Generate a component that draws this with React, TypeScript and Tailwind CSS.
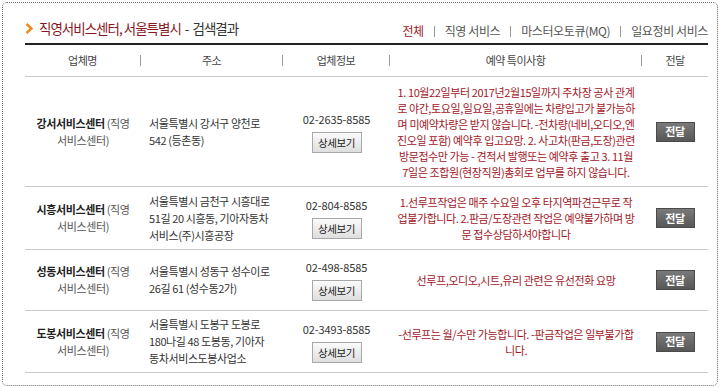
import React from 'react'

const font = { fontFamily: '"Noto Sans CJK KR", "Noto Sans", sans-serif' }

type Row = {
  name: string
  addr: string[]
  phone: string
  note: string[]
  h: string
}

const rows: Row[] = [
  {
    name: '강서서비스센터',
    addr: ['서울특별시 강서구 양천로', '542 (등촌동)'],
    phone: '02-2635-8585',
    note: [
      '1. 10월22일부터 2017년2월15일까지 주차장 공사 관계',
      '로 야간,토요일,일요일,공휴일에는 차량입고가 불가능하',
      '며 미예약차량은 받지 않습니다. -전차량(네비,오디오,엔',
      '진오일 포함) 예약후 입고요망. 2. 사고차(판금,도장)관련',
      '방문접수만 가능 - 견적서 발행또는 예약후 출고 3. 11월',
      '7일은 조합원(현장직원)총회로 업무를 하지 않습니다.',
    ],
    h: 'h-[110px]',
  },
  {
    name: '시흥서비스센터',
    addr: ['서울특별시 금천구 시흥대로', '51길 20 시흥동, 기아자동차', '서비스(주)시흥공장'],
    phone: '02-804-8585',
    note: [
      '1.선루프작업은 매주 수요일 오후 타지역파견근무로 작',
      '업불가합니다. 2.판금/도장관련 작업은 예약불가하며 방',
      '문 접수상담하셔야합니다',
    ],
    h: 'h-[63px]',
  },
  {
    name: '성동서비스센터',
    addr: ['서울특별시 성동구 성수이로', '26길 61 (성수동2가)'],
    phone: '02-498-8585',
    note: ['선루프,오디오,시트,유리 관련은 유선전화 요망'],
    h: 'h-[61px]',
  },
  {
    name: '도봉서비스센터',
    addr: ['서울특별시 도봉구 도봉로', '180나길 48 도봉동, 기아자', '동차서비스도봉사업소'],
    phone: '02-3493-8585',
    note: ['-선루프는 월/수만 가능합니다. -판금작업은 일부불가합', '니다.'],
    h: 'h-[62px]',
  },
]

const cols = 'grid grid-cols-[116px_142px_107px_252px_66px]'

function Sep() {
  return <span className="h-[11px] w-px bg-[#9a9a9a]" />
}

export default function App() {
  return (
    <div className="h-[387px] w-[720px] bg-white pl-[2px] pt-[2px]" style={font}>
      <div className="h-[384px] w-[716px] rounded-[5px] border border-dotted border-[#6a6a6a] pl-[22px]">
        <div className="flex h-[40px] w-[683px] items-end justify-between pb-[4px]">
          <div className="flex items-center gap-[6px] pb-[2px]">
            <svg width="8" height="11" viewBox="0 0 8 11" className="shrink-0">
              <path d="M1.5 1 L6.5 5.5 L1.5 10" fill="none" stroke="#f08a1c" strokeWidth="2.4" />
            </svg>
            <span className="flex items-center gap-[4px] text-[13.5px] leading-[18px] tracking-[-1px] text-[#8a1622]">
              <span>직영서비스센터, 서울특별시</span>
              <span className="text-[#333]">-</span>
              <span className="text-[#333]">검색결과</span>
            </span>
          </div>
          <div className="flex items-center gap-[10px] text-[12px] leading-[16px] tracking-[-0.4px] text-[#555]">
            <span className="text-[#a0141e]">전체</span>
            <Sep />
            <span>직영 서비스</span>
            <Sep />
            <span>마스터오토큐(MQ)</span>
            <Sep />
            <span>일요정비 서비스</span>
          </div>
        </div>
        <div className="w-[683px] border-t-2 border-[#222]">
          <div className={`${cols} h-[32px] items-center border-b border-[#c8c8c8] text-[11px] tracking-[-0.5px] text-[#444]`}>
            <div className="flex items-center">
              <span className="flex-1 text-center">업체명</span>
              <Sep />
            </div>
            <div className="flex items-center">
              <span className="flex-1 text-center">주소</span>
              <Sep />
            </div>
            <div className="flex items-center">
              <span className="flex-1 text-center">업체정보</span>
              <Sep />
            </div>
            <div className="flex items-center">
              <span className="flex-1 text-center">예약 특이사항</span>
              <Sep />
            </div>
            <div className="text-center">전달</div>
          </div>
          {rows.map((r) => (
            <div
              key={r.name}
              className={`${cols} ${r.h} items-center border-b border-[#c8c8c8] text-[11px] leading-[17px] tracking-[-0.4px]`}
            >
              <div className="px-[6px] text-center text-[#555]">
                <b className="font-bold text-[#222]">{r.name}</b> (직영
                <br />
                서비스센터)
              </div>
              <div className="pl-[8px] text-[#333]">
                {r.addr.map((a) => (
                  <div key={a} className="whitespace-nowrap">{a}</div>
                ))}
              </div>
              <div className="flex flex-col items-center">
                <span className="text-[11px] tracking-[-0.1px] text-[#333]">{r.phone}</span>
                <button
                  type="button"
                  className="mt-[4px] h-[21px] w-[50px] border border-[#a8a8a8] bg-gradient-to-b from-[#fbfbfb] to-[#dedede] text-[10.5px] text-[#222]"
                >
                  상세보기
                </button>
              </div>
              <div className="text-center leading-[16px] text-[#a3161f]">
                {r.note.map((n) => (
                  <div key={n} className="whitespace-nowrap">{n}</div>
                ))}
              </div>
              <div className="flex justify-center">
                <button
                  type="button"
                  className="h-[20px] w-[39px] border border-[#4a4a4a] bg-gradient-to-b from-[#7a7a7a] to-[#575757] text-[11px] font-bold text-white"
                >
                  전달
                </button>
              </div>
            </div>
          ))}
        </div>
      </div>
    </div>
  )
}
